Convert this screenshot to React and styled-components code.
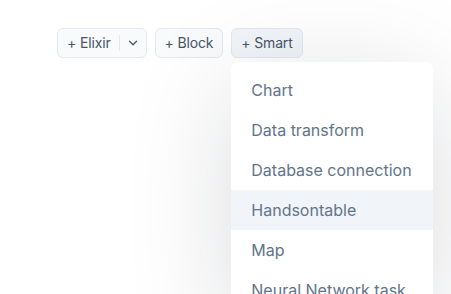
import React from "react"
import styled, { createGlobalStyle } from "styled-components"

const GlobalStyle = createGlobalStyle`
  body {
    margin: 0;
    background: #ffffff;
    font-family: Inter, "Noto Sans", sans-serif;
    overflow: hidden;
  }
`

const Page = styled.div`
  width: 451px;
  height: 294px;
  padding: 28px 0 0 57px;
  box-sizing: border-box;
`

const Toolbar = styled.div`
  display: flex;
  align-items: flex-start;
  gap: 8px;
`

const Button = styled.button`
  display: flex;
  align-items: center;
  height: 30px;
  padding: 0 9px;
  box-sizing: border-box;
  border: 1px solid #e2e8f0;
  border-radius: 6px;
  background: ${props => (props.active ? "#f1f5f9" : "#f8fafc")};
  color: #475569;
  font-family: Inter, sans-serif;
  font-size: 14px;
  font-weight: 400;
  letter-spacing: -0.15px;
  line-height: 1;
  cursor: pointer;
`

const SplitButton = styled(Button)`
  padding-right: 0;
`

const Divider = styled.span`
  width: 1px;
  height: 16px;
  background: #e2e8f0;
  margin-left: 8px;
`

const Chevron = styled.span`
  display: flex;
  align-items: center;
  justify-content: center;
  width: 26px;
  height: 100%;
`

const Anchor = styled.div`
  position: relative;
`

const Menu = styled.div`
  position: absolute;
  top: 34px;
  left: 0;
  width: 202px;
  padding: 8px 0;
  background: #ffffff;
  border-radius: 8px;
  box-shadow: 0 20px 110px -6px rgba(15, 23, 42, 0.17);
  z-index: 10;
`

const Item = styled.div`
  height: 40px;
  display: flex;
  align-items: center;
  padding: 0 20px;
  font-size: 16px;
  font-weight: 400;
  color: #61748a;
  white-space: nowrap;
  background: ${props => (props.highlighted ? "#f1f5f9" : "transparent")};
`

const items = [
  "Chart",
  "Data transform",
  "Database connection",
  "Handsontable",
  "Map",
  "Neural Network task",
]

const App = () => {
  return (
    <>
      <GlobalStyle />
      <Page>
        <Toolbar>
          <SplitButton>
            + Elixir
            <Divider />
            <Chevron>
              <svg width="14" height="14" viewBox="0 0 24 24" fill="none" stroke="#475569" strokeWidth="2.2" strokeLinecap="round" strokeLinejoin="round">
                <polyline points="6 9 12 15 18 9" />
              </svg>
            </Chevron>
          </SplitButton>
          <Button>+ Block</Button>
          <Anchor>
            <Button active>+ Smart</Button>
            <Menu>
              {items.map(name => (
                <Item key={name} highlighted={name === "Handsontable"}>
                  {name}
                </Item>
              ))}
            </Menu>
          </Anchor>
        </Toolbar>
      </Page>
    </>
  )
}

export default App
